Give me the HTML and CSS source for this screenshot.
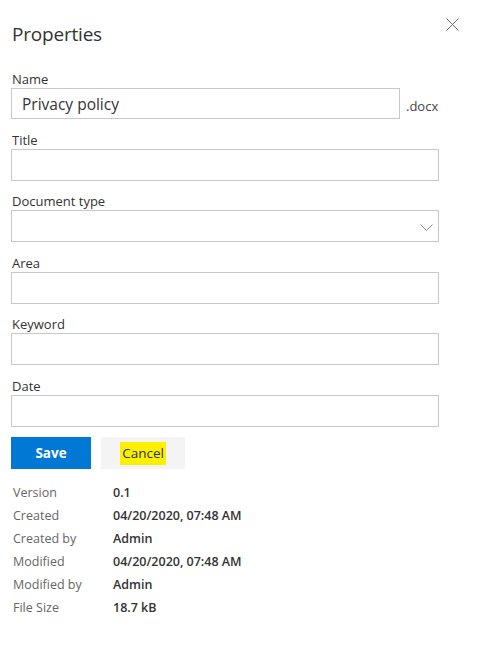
FILE: index.html
```html
<!DOCTYPE html>
<html lang="en">
<head>
    <meta charset="UTF-8">
    <meta name="viewport" content="width=device-width, initial-scale=1.0">
    <title>Properties</title>
    <link rel="stylesheet" href="styles.css">
</head>
<body>

<!-- Panou proprietati -->
<div id="panel">
    <div class="panel-header">
        <h1 class="panel-title">Properties</h1>
        <button class="close-button" aria-label="Close">
            <svg width="13" height="13" viewBox="0 0 13 13">
                <path d="M0.5 0.5 L12.5 12.5 M12.5 0.5 L0.5 12.5" stroke="#6b6b6b" stroke-width="1" fill="none"/>
            </svg>
        </button>
    </div>

    <div class="field">
        <label class="field-label">Name</label>
        <div class="name-row">
            <input type="text" class="input-field name-input" value="Privacy policy">
            <span class="extension">.docx</span>
        </div>
    </div>

    <div class="field">
        <label class="field-label">Title</label>
        <input type="text" class="input-field">
    </div>

    <div class="field">
        <label class="field-label">Document type</label>
        <div class="select-field">
            <svg class="chevron" width="13" height="7" viewBox="0 0 13 7">
                <path d="M0.5 0.5 L6.5 6.5 L12.5 0.5" stroke="#8a8a8a" stroke-width="1" fill="none"/>
            </svg>
        </div>
    </div>

    <div class="field">
        <label class="field-label">Area</label>
        <input type="text" class="input-field">
    </div>

    <div class="field">
        <label class="field-label">Keyword</label>
        <input type="text" class="input-field">
    </div>

    <div class="field">
        <label class="field-label">Date</label>
        <input type="text" class="input-field">
    </div>

    <!-- Butoane -->
    <div class="button-row">
        <button class="save-button">Save</button>
        <button class="cancel-button"><span class="highlight">Cancel</span></button>
    </div>

    <!-- Informatii fisier -->
    <div class="info-table">
        <div class="info-label">Version</div>      <div class="info-value">0.1</div>
        <div class="info-label">Created</div>      <div class="info-value">04/20/2020, 07:48 AM</div>
        <div class="info-label">Created by</div>   <div class="info-value">Admin</div>
        <div class="info-label">Modified</div>     <div class="info-value">04/20/2020, 07:48 AM</div>
        <div class="info-label">Modified by</div>  <div class="info-value">Admin</div>
        <div class="info-label">File Size</div>    <div class="info-value">18.7 kB</div>
    </div>
</div>

</body>
</html>
```

FILE: styles.css
```css
/* Stil general */
body {
    background-color: #ffffff;
    color: #333333;
    font-family: 'Open Sans', 'Noto Sans', sans-serif;
    margin: 0;
    padding: 0;
}

#panel {
    width: 428px;
    padding: 20px 0 0 11px;
}

.panel-header {
    display: flex;
    justify-content: space-between;
    align-items: flex-start;
    height: 50px;
}

.panel-title {
    margin: 0;
    padding-left: 1px;
    font-size: 19px;
    font-weight: 400;
    line-height: 28px;
    color: #333333;
    letter-spacing: -0.2px;
}

.close-button {
    background: none;
    border: none;
    padding: 0;
    margin: -2px -20px 0 0;
    cursor: pointer;
    line-height: 0;
}

/* Campuri */
.field {
    margin-bottom: 11.5px;
}

.field-label {
    display: block;
    font-size: 13px;
    line-height: 18px;
    color: #333333;
    padding-left: 1px;
}

.input-field,
.select-field {
    display: block;
    box-sizing: border-box;
    width: 100%;
    height: 32px;
    border: 1px solid #c8c8c8;
    background-color: #ffffff;
    padding: 0 10px;
    font-family: inherit;
    font-size: 15.5px;
    color: #333333;
    outline: none;
    margin: 0;
}

.name-row {
    display: flex;
    align-items: center;
}

.name-input {
    width: 389px;
    height: 31px;
}

.extension {
    margin-left: 6px;
    font-size: 13px;
    color: #444444;
    padding-top: 4px;
}

.select-field {
    display: flex;
    align-items: center;
    justify-content: flex-end;
    padding-right: 5px;
}

.chevron {
    margin-top: 2px;
}

/* Butoane Save / Cancel */
.button-row {
    display: flex;
    gap: 10px;
    margin-top: -1.5px;
}

.save-button,
.cancel-button {
    height: 32px;
    border: none;
    font-family: inherit;
    font-size: 13.5px;
    cursor: pointer;
    padding: 0;
}

.save-button {
    width: 80px;
    background-color: #0078d4;
    color: #ffffff;
    font-weight: 700;
}

.cancel-button {
    width: 84px;
    background-color: #f4f4f4;
    color: #333333;
}

.highlight {
    background-color: #fbf000;
    padding: 2px 2px 3px 2px;
}

/* Tabel informatii */
.info-table {
    display: grid;
    grid-template-columns: 100px auto;
    grid-auto-rows: 23px;
    margin-top: 12px;
    padding-left: 2px;
    font-size: 12.5px;
    line-height: 23px;
}

.info-label {
    color: #666666;
}

.info-value {
    color: #333333;
    font-weight: 600;
}
```
